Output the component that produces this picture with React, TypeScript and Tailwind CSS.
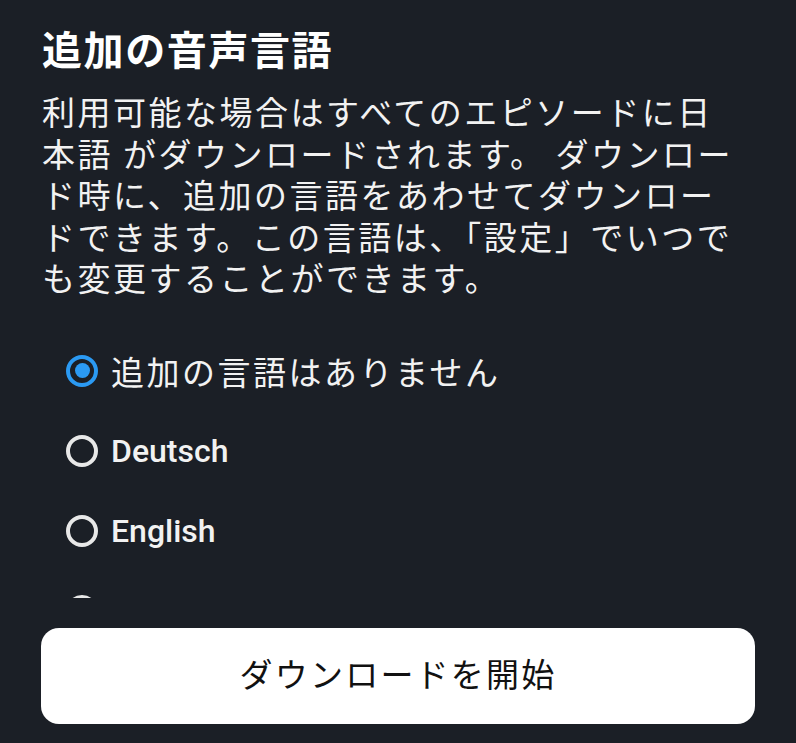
import React from "react";

function Radio({ checked }: { checked?: boolean }) {
  if (checked) {
    return (
      <span className="flex h-[32px] w-[32px] shrink-0 items-center justify-center rounded-full border-[4px] border-[#2b9af3]">
        <span className="h-[15px] w-[15px] rounded-full bg-[#2b9af3]" />
      </span>
    );
  }
  return <span className="h-[32px] w-[32px] shrink-0 rounded-full border-[4px] border-[#e8e8e8]" />;
}

export default function App() {
  const cjk = { fontFamily: '"Noto Sans CJK JP", "Noto Sans", sans-serif' };
  const latin = { fontFamily: 'Roboto, "Noto Sans CJK JP", sans-serif' };
  return (
    <div className="flex h-[743px] w-[796px] flex-col overflow-hidden bg-[#1b1f26] text-[#f2f2f2]" style={cjk}>
      <div className="h-[598px] shrink-0 overflow-hidden px-[42px] pt-[22px]">
        <h1 className="text-[40px] font-bold leading-[52px] tracking-[1.6px] text-white">追加の音声言語</h1>
        <p className="mt-[17px] text-[33px] leading-[41.5px] tracking-[2.5px]">
          利用可能な場合はすべてのエピソードに日
          <br />
          本語 がダウンロードされます。 ダウンロー
          <br />
          ド時に、追加の言語をあわせてダウンロー
          <br />
          ドできます。この言語は、「設定」でいつで
          <br />
          も変更することができます。
        </p>
        <div className="mt-[32px] flex flex-col pl-[24px]">
          <div className="flex h-[80px] items-center gap-[13px]">
            <Radio checked />
            <span className="text-[33px] leading-[40px] tracking-[2.5px]">追加の言語はありません</span>
          </div>
          <div className="flex h-[80px] items-center gap-[13px]">
            <Radio />
            <span className="text-[32px] font-medium leading-[40px]" style={latin}>Deutsch</span>
          </div>
          <div className="flex h-[80px] items-center gap-[13px]">
            <Radio />
            <span className="text-[32px] font-medium leading-[40px]" style={latin}>English</span>
          </div>
          <div className="flex h-[80px] items-center gap-[13px]">
            <Radio />
            <span className="text-[32px] font-medium leading-[40px]" style={latin}>Français</span>
          </div>
        </div>
      </div>
      <div className="px-[41px] pt-[30px]">
        <button className="flex h-[96px] w-full items-center justify-center rounded-[18px] bg-white pb-[4px] text-[33px] tracking-[2.2px] text-[#111]">
          ダウンロードを開始
        </button>
      </div>
    </div>
  );
}
